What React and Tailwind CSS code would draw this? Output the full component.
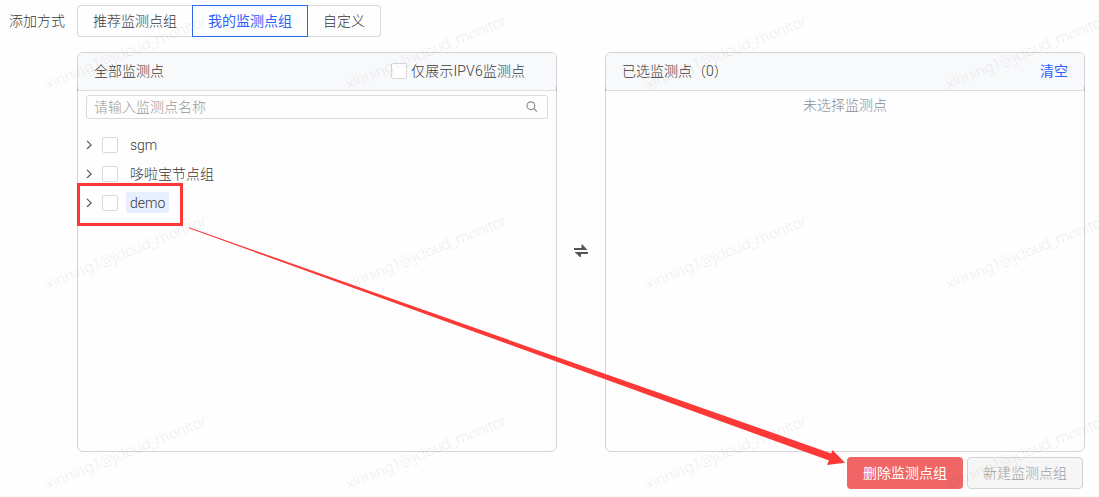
const watermarks = [
  [48, 89.5], [348, 89.5], [648, 89.5], [948, 89.5],
  [48, 289.5], [348, 289.5], [648, 289.5], [948, 289.5],
  [48, 489.5], [348, 489.5], [648, 489.5], [948, 489.5],
];

function Checkbox() {
  return <span className="block size-4 shrink-0 rounded-[2px] border border-[#d9d9d9] bg-white" />;
}

function TreeRow({ label, active }) {
  return (
    <div className="flex h-[29px] items-center">
      <svg className="mr-[8px] size-[9px] shrink-0" viewBox="0 0 9 9" fill="none" stroke="#555" strokeWidth="1.2">
        <path d="M2 0.8 L6.1 4.9 L2 9" />
      </svg>
      <Checkbox />
      <span className={active ? 'ml-2 flex h-[21px] items-center rounded-[2px] bg-[#e8f0ff] px-1' : 'ml-2 flex h-[21px] items-center px-1'}>
        {label}
      </span>
    </div>
  );
}

function Panel({ header, children }) {
  return (
    <section className="h-[400px] w-[480px] shrink-0 overflow-hidden rounded-[6px] border border-[#d3d5d8]">
      <header className="flex h-[38px] items-center border-b border-[#dcdee0] bg-[#f8f9fb] pr-4 pb-[2px] pl-4">
        {header}
      </header>
      {children}
    </section>
  );
}

export default function App() {
  return (
    <main className="relative h-[497px] w-[1099px] overflow-hidden border-b border-[#fafafa] bg-[#fefefe] pt-[5px] font-['Roboto','Noto_Sans_CJK_SC',sans-serif] text-[14px] leading-5 font-light text-[#383838]">
      <div className="flex h-8 items-center">
        <span className="w-[77px] pl-[9px]">添加方式</span>
        <div className="flex h-8">
          <button className="w-[115px] rounded-l-[4px] border border-r-0 border-[#d9d9d9]">推荐监测点组</button>
          <button className="w-[116px] border border-[#2d68ee] font-normal text-[#2962ff]">我的监测点组</button>
          <button className="w-[73px] rounded-r-[4px] border border-l-0 border-[#d9d9d9]">自定义</button>
        </div>
      </div>

      <div className="mt-[15px] flex pl-[77px]">
        <Panel
          header={
            <>
              <span>全部监测点</span>
              <label className="mr-[14px] ml-auto flex w-[135px] items-center gap-1 whitespace-nowrap">
                <Checkbox />
                <span className="tracking-[0.15px]">仅展示IPV6监测点</span>
              </label>
            </>
          }
        >
          <div className="px-2 pt-1">
            <div className="flex h-6 items-center justify-between rounded-[3px] border border-[#d9d9d9] pr-[9px] pl-[7px] text-[#999]">
              <span>请输入监测点名称</span>
              <svg className="size-3" viewBox="0 0 12 12" fill="none" stroke="#858994" strokeWidth="1.15">
                <circle cx="4.9" cy="4.7" r="3.9" />
                <path d="M7.8 7.6 L10.9 10.7" />
              </svg>
            </div>
          </div>
          <div className="pt-[11px] pl-[7px]">
            <TreeRow label="sgm" />
            <TreeRow label="哆啦宝节点组" />
            <TreeRow label="demo" active />
          </div>
        </Panel>
        <div className="flex w-12 items-center justify-center pb-[3px]">
          <svg className="h-[13px] w-[14px]" viewBox="0 0 14 13" fill="#555">
            <path d="M0 4 H7.5 V0.5 H8.5 L13.5 6 H0 Z M14 8 H0.5 L6 13 H7 V10 H14 Z" />
          </svg>
        </div>
        <Panel
          header={
            <>
              <span>已选监测点（0）</span>
              <button className="ml-auto font-normal text-[#2962ff]">清空</button>
            </>
          }
        >
          <p className="pt-1 text-center text-[#8c8c8c]">未选择监测点</p>
        </Panel>
      </div>

      <div className="mt-[5px] flex justify-end gap-1 pr-4">
        <button className="h-8 w-[116px] rounded-[4px] bg-[#f06666] font-normal text-white">删除监测点组</button>
        <button className="h-8 w-[116px] rounded-[4px] border border-[#d3d3d3] bg-[#f6f6f6] text-[#a0a0a0]">新建监测点组</button>
      </div>

      <svg className="pointer-events-none absolute inset-0" width="1099" height="497">
        <g fill="#000" fillOpacity="0.065" fontFamily="'Noto Sans', sans-serif" fontSize="15.5" fontWeight="400">
          {watermarks.map(([x, y]) => (
            <text key={`${x}-${y}`} transform={`translate(${x} ${y}) rotate(-22)`} textLength="173">xinning1@jcloud_monitor</text>
          ))}
        </g>
        <path d="M77.5 87 V91 M556.5 87 V91 M605.5 87 V91 M1084.5 87 V91" stroke="#b0b2b5" />
        <rect x="78.5" y="184.5" width="103" height="40" fill="none" stroke="#fc3937" strokeWidth="3" />
        <path d="M189 227.3 L831.3 453.5 L832.5 450 L845 462.8 L827 465 L829 460.5 L189 228.3 Z" fill="#fc3937" />
      </svg>
    </main>
  );
}
